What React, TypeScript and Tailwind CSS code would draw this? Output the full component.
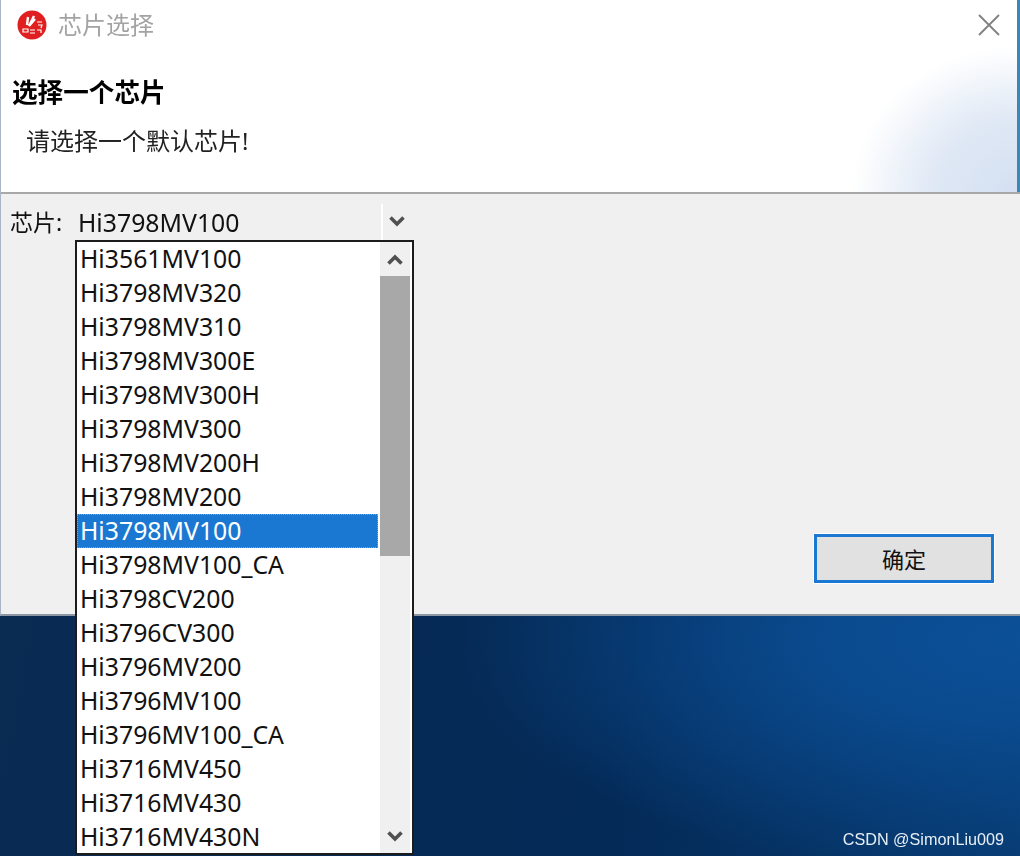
const items = [
  "Hi3561MV100","Hi3798MV320","Hi3798MV310","Hi3798MV300E","Hi3798MV300H","Hi3798MV300","Hi3798MV200H","Hi3798MV200","Hi3798MV100","Hi3798MV100_CA","Hi3798CV200","Hi3796CV300","Hi3796MV200","Hi3796MV100","Hi3796MV100_CA","Hi3716MV450","Hi3716MV430","Hi3716MV430N",
];

function Chevron({ up = false }: { up?: boolean }) {
  return (
    <svg width="16" height="12" viewBox="0 0 16 12" className="block">
      <path d={up ? "M1.5 10.5 L8 4 L14.5 10.5" : "M1.5 1.5 L8 8 L14.5 1.5"} fill="none" stroke="#505050" strokeWidth="3.6" />
    </svg>
  );
}

function Logo() {
  return (
    <svg width="30" height="30" viewBox="0 0 30 30" className="block shrink-0">
      <circle cx="15" cy="15" r="14.5" fill="#e02020" />
      <path d="M11 7 L10 15 M17 6 L12 16 L18 9" fill="none" stroke="#fff" strokeWidth="2.4" />
      <path d="M20 12 h5 M21 15 h4 l-1 3 M6 19 h5 v3 h-5 z M13 20 h5 M13 23 h5 M20 20 h4 v3" fill="none" stroke="#fff" strokeWidth="1.2" />
    </svg>
  );
}

export default function App() {
  return (
    <div className="relative flex h-[856px] w-[1020px] flex-col overflow-hidden font-['Noto_Sans','Noto_Sans_CJK_SC',sans-serif] text-[#111] blur-[0.35px]">
      <div className="flex h-[616px] flex-col border-b-2 border-l border-[#a9b4c4] border-b-[#8d97a3]">
        <div className="flex h-[192px] flex-col border-r-[3px] border-r-[#3f86b5] bg-[radial-gradient(ellipse_165px_145px_at_100%_100%,#d4e0f2_0%,#dfe8f5_50%,#ffffff_100%)]">
          <div className="flex items-center pl-[16px] pr-[17px] pt-[10px]">
            <Logo />
            <span className="ml-[11px] text-[24px] leading-[30px] text-[#a3a3a3]">芯片选择</span>
            <svg width="22" height="22" viewBox="0 0 22 22" className="ml-auto">
              <path d="M1 1 L21 21 M21 1 L1 21" stroke="#808080" strokeWidth="1.8" fill="none" />
            </svg>
          </div>
          <div className="ml-[11px] mt-[35px] text-[25.6px] font-bold leading-[36px] text-black">选择一个芯片</div>
          <div className="ml-[25px] mt-[12px] text-[24px] leading-[36px] text-[#222]">请选择一个默认芯片!</div>
        </div>
        <div className="h-[2px] bg-[#a8a8a8]" />
        <div className="flex flex-1 flex-col bg-[#f0f0f0]">
          <div className="flex h-[46px] items-center pl-[9px] pt-[10px]">
            <span className="w-[68px] text-[23px] leading-[30px]">芯片:</span>
            <span className="w-[303px] text-[24.8px] leading-[30px]">Hi3798MV100</span>
            <div className="flex h-[36px] w-[32px] items-center border-l-2 border-white pl-[6px]">
              <Chevron />
            </div>
          </div>
          <div className="mt-auto mb-[31px] mr-[26px] flex justify-end">
            <button className="h-[49px] w-[180px] border-[3px] border-[#1a78d2] bg-[#e1e1e1] text-[22px] leading-none text-[#111] outline outline-1 outline-white">
              确定
            </button>
          </div>
        </div>
      </div>

      <div className="relative flex-1 bg-[radial-gradient(ellipse_560px_240px_at_100%_10%,#0c5098_0%,#0a4a8e_35%,transparent_100%),linear-gradient(100deg,#0a2b52_0%,#042a57_60%,#073a70_100%)]">
        <span className="absolute bottom-[8px] right-[16px] font-['Liberation_Sans',sans-serif] text-[16.2px] leading-[18px] text-[#e8eef5]">
          CSDN @SimonLiu009
        </span>
      </div>

      <div className="absolute left-[75px] top-[240px] flex h-[615px] w-[339px] border-2 border-[#1c1c1c] bg-white">
        <ul className="w-[303px] pr-[2px]">
          {items.map((item) => {
            const selected = item === "Hi3798MV100";
            return (
              <li
                key={item}
                className={
                  selected
                    ? "flex h-[34px] items-center border border-dotted border-[#e8902c] bg-[#1a78d2] pb-[2px] pl-[2px] text-[24.8px] leading-none text-white"
                    : "flex h-[34px] items-center pb-[2px] pl-[3px] text-[24.8px] leading-none text-[#111]"
                }
              >
                {item}
              </li>
            );
          })}
        </ul>
        <div className="flex w-[30px] flex-col bg-[#f0f0f0]">
          <div className="flex h-[34px] items-center justify-center"><Chevron up /></div>
          <div className="h-[280px] bg-[#a8a8a8]" />
          <div className="mt-auto flex h-[32px] items-center justify-center"><Chevron /></div>
        </div>
      </div>
    </div>
  );
}
